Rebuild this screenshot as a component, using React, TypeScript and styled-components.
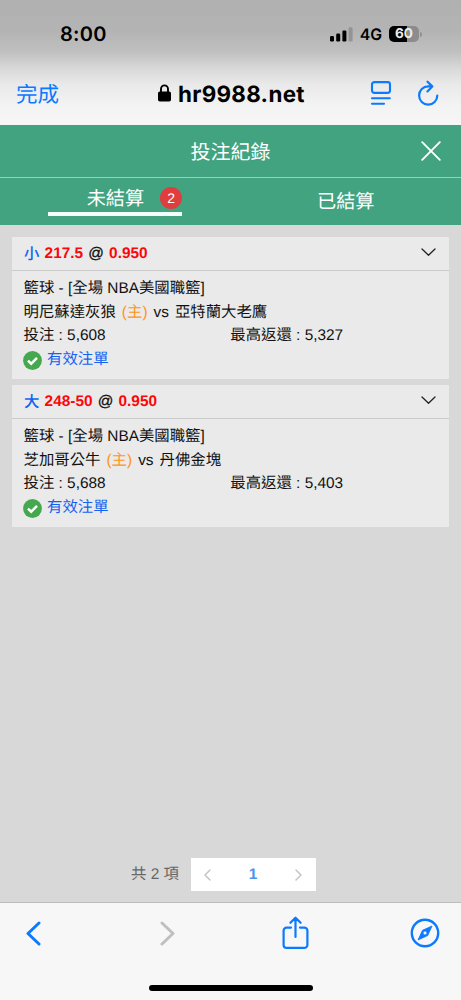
import React from "react";
import styled, { createGlobalStyle } from "styled-components";

const GlobalStyle = createGlobalStyle`
  *, *::before, *::after { box-sizing: border-box; }
  body { margin: 0; background: #d8d8d8; text-rendering: geometricPrecision; }
  svg { display: block; flex: none; }
`;

const Screen = styled.div`
  width: 461px;
  height: 1000px;
  display: flex;
  flex-direction: column;
  overflow: hidden;
  background: #d8d8d8;
  color: #111;
  font-family: "Liberation Sans", "Noto Sans CJK TC", sans-serif;
  font-size: 15.4px;
`;

const BrowserTop = styled.header`
  height: 125px;
  flex: none;
  background: linear-gradient(#b0b0b0 0, #b4b4b4 32px, #c0c0c0 52px, #d8d8d8 68px, #e9e9e9 84px, #f3f3f3 105px, #f6f6f6 125px);
`;

const StatusBar = styled.div`
  height: 68px;
  display: flex;
  justify-content: space-between;
  align-items: center;
  padding: 0 39px 0 60px;
  font-family: Inter, sans-serif;
  color: #000;
`;

const Clock = styled.span`
  font-size: 20px;
  font-weight: 600;
  letter-spacing: 0.3px;
`;

const StatusIcons = styled.div`
  display: flex;
  align-items: center;
`;

const Network = styled.span`
  font-size: 15.8px;
  font-weight: 600;
  margin: 1px 7px 0 7px;
`;

const Battery = styled.div`
  display: flex;
  align-items: center;
  gap: 1px;
  &::after {
    content: "";
    width: 2px;
    height: 5px;
    border-radius: 0 2px 2px 0;
    background: #929292;
  }
`;

const BatteryLevel = styled.div`
  width: 30px;
  height: 16px;
  border-radius: 5px;
  background: linear-gradient(90deg, #000 60%, #8c8c8c 60%);
  color: #ececec;
  font-size: 13.5px;
  font-weight: 700;
  line-height: 17.5px;
  text-align: center;
`;

const AddressBar = styled.div`
  height: 51px;
  display: flex;
  align-items: center;
  padding: 0 22px 0 16px;
  color: #0a7aff;
`;

const Done = styled.span`
  width: 142px;
  font-family: "Noto Sans CJK TC", sans-serif;
  font-size: 21.5px;
  font-weight: 400;
  line-height: 30px;
`;

const Address = styled.div`
  display: flex;
  align-items: center;
  gap: 7px;
  width: 212px;
  margin-top: 1px;
  color: #000;
  font-family: Inter, sans-serif;
  font-size: 22.4px;
  font-weight: 700;
  letter-spacing: 0.3px;
  white-space: nowrap;
  svg { margin-top: -2px; }
`;

const AddressActions = styled.div`
  display: flex;
  align-items: center;
  gap: 25px;
  margin-top: -1px;
`;

const TitleBar = styled.div`
  height: 53px;
  flex: none;
  display: grid;
  grid-template-columns: 40px 1fr 40px;
  align-items: center;
  padding: 0 20px;
  background: #41a380;
  border-bottom: 1px solid #9bceba;
  color: #fff;
  text-align: center;
  font-family: "Noto Sans CJK TC", sans-serif;
  font-size: 20px;
  line-height: 30px;
  svg { justify-self: end; }
`;

const Tabs = styled.nav`
  height: 47px;
  flex: none;
  display: grid;
  grid-template-columns: 1fr 1fr;
  justify-items: center;
  align-items: start;
  background: #41a380;
  color: #fff;
  font-family: "Noto Sans CJK TC", sans-serif;
  font-size: 19.2px;
`;

const Tab = styled.div<{ $active?: boolean }>`
  width: 134px;
  height: ${(p) => (p.$active ? 38 : 44)}px;
  display: flex;
  align-items: center;
  justify-content: ${(p) => (p.$active ? "flex-end" : "center")};
  gap: 16px;
  border-bottom: ${(p) => (p.$active ? "4px solid #f4fffb" : "0")};
  padding-top: ${(p) => (p.$active ? 4 : 0)}px;
  line-height: 28px;
`;

const Badge = styled.span`
  width: 22px;
  height: 22px;
  margin-top: 2px;
  border-radius: 50%;
  background: #e03e3e;
  font-family: "Liberation Sans", sans-serif;
  font-size: 14px;
  line-height: 22px;
  text-align: center;
`;

const BetList = styled.main`
  flex: 1;
  display: flex;
  flex-direction: column;
  gap: 6px;
  padding: 12px 12px 0;
`;

const Card = styled.article`
  height: 142px;
  background: #eaeaea;
`;

const CardHeader = styled.div`
  height: 34px;
  display: flex;
  align-items: center;
  gap: 5.2px;
  padding: 0 13px 0 12px;
  border-bottom: 1px solid #cacaca;
  color: #fb060a;
  font-weight: 700;
  line-height: 24px;
  svg { margin: -3px 0 0 auto; }
`;

const Side = styled.span`
  color: #1463f0;
  font-weight: 500;
  margin-top: 2px;
`;

const At = styled.span`
  color: #111;
  font-weight: 400;
  -webkit-text-stroke: 0.3px #111;
`;

const CardBody = styled.div`
  padding: 6px 12px 0 11.5px;
`;

const Line = styled.div`
  height: 23.6px;
  display: flex;
  align-items: center;
  line-height: 23.6px;
  white-space: pre;
`;

const Half = styled.span`
  width: 50%;
`;

const Home = styled.span`
  color: #ff9518;
  margin: 0 6px;
`;

const Versus = styled.span`
  margin-right: 6px;
`;

const Status = styled(Line)`
  gap: 5px;
  height: 25px;
  margin-left: -0.5px;
  line-height: 26px;
  color: #1463f0;
`;

const Pagination = styled.div`
  height: 33px;
  flex: none;
  display: flex;
  align-items: center;
  gap: 12px;
  margin: 0 0 11px 131px;
  color: #666;
  line-height: 30px;
`;

const Total = styled.span`
  margin-top: 0;
`;

const Pager = styled.div`
  width: 125px;
  height: 33px;
  display: flex;
  align-items: center;
  justify-content: space-between;
  padding: 0 14px 0 13px;
  background: #fff;
  color: #4a94ec;
  font-weight: 700;
`;

const BrowserBottom = styled.footer`
  height: 98px;
  flex: none;
  display: flex;
  flex-direction: column;
  align-items: center;
  background: #f7f7f7;
  border-top: 1px solid #bcbcbc;
`;

const Toolbar = styled.div`
  width: 100%;
  height: 60px;
  display: grid;
  grid-template-columns: 133.5px 122px 128.5px 30px;
  align-items: center;
  padding: 0 20px 0 26px;
`;

const HomeIndicator = styled.div`
  width: 164px;
  height: 6px;
  margin-top: 22px;
  border-radius: 3px;
  background: #000;
`;

function Signal() {
  return (
    <svg width="23" height="15" viewBox="0 0 23 15">
      <rect x="0" y="9" width="4" height="5.5" rx="1.2" />
      <rect x="6.2" y="6.5" width="4" height="8" rx="1.2" />
      <rect x="12.4" y="3.5" width="4" height="11" rx="1.2" />
      <rect x="18.6" y="0.3" width="4" height="14.2" rx="1.2" fill="#949494" />
    </svg>
  );
}

function Lock() {
  return (
    <svg width="13" height="18" viewBox="0 0 13 18">
      <rect x="0" y="7.5" width="13" height="10" rx="1.8" />
      <path d="M3 8V4.9a3.5 3.5 0 0 1 7 0V8" fill="none" stroke="#000" strokeWidth="1.9" />
    </svg>
  );
}

function Reader() {
  return (
    <svg width="22" height="26" viewBox="0 0 22 26" fill="none" stroke="#0a7aff" strokeWidth="2.1" strokeLinecap="round">
      <rect x="2" y="2.1" width="18" height="10.8" rx="2.4" />
      <path d="M2 18.3h17.8M2 23.7h12" />
    </svg>
  );
}

function Reload() {
  return (
    <svg width="22" height="26" viewBox="0 0 22 26" fill="none" stroke="#0a7aff" strokeWidth="2.2" strokeLinecap="round" strokeLinejoin="round">
      <path d="M14.6 6.4H11.2a9.1 9.1 0 1 0 9.1 9.1M10.5 1.7l4.8 4.7-4.9 5" />
    </svg>
  );
}

function Check() {
  return (
    <svg width="19" height="19" viewBox="0 0 19 19">
      <circle cx="9.5" cy="9.5" r="9.4" fill="#46a84e" />
      <path d="M5 9.6l3.2 3.1 5.8-5.9" fill="none" stroke="#fff" strokeWidth="2.5" />
    </svg>
  );
}

function Arrow({ d, w, h, color, stroke }: { d: string; w: number; h: number; color: string; stroke: number }) {
  return (
    <svg width={w} height={h} viewBox={`0 0 ${w} ${h}`} fill="none" stroke={color} strokeWidth={stroke} strokeLinecap="round" strokeLinejoin="round">
      <path d={d} />
    </svg>
  );
}

function Share() {
  return (
    <svg width="27" height="34" viewBox="0 0 27 34" fill="none" stroke="#0a7aff" strokeWidth="2.2" strokeLinecap="round" strokeLinejoin="round">
      <path d="M9 11.6H4.6a3 3 0 0 0-3 3v14.3a3 3 0 0 0 3 3h17.8a3 3 0 0 0 3-3V14.6a3 3 0 0 0-3-3H18M13.5 21V2M8.4 6.8l5.1-5.1 5.1 5.1" />
    </svg>
  );
}

function Compass() {
  return (
    <svg width="30" height="30" viewBox="0 0 30 30">
      <circle cx="15" cy="15" r="13.2" fill="none" stroke="#0a7aff" strokeWidth="2.4" />
      <path fillRule="evenodd" fill="#0a7aff" stroke="#0a7aff" strokeWidth=".8" strokeLinejoin="round" d="M22 8L17.7 17.6 8 22l4.5-9.7ZM15 13a2 2 0 1 0 0 4 2 2 0 0 0 0-4Z" />
    </svg>
  );
}

interface Bet {
  side: string;
  line: string;
  home: string;
  away: string;
  stake: string;
  payout: string;
}

const bets: Bet[] = [
  { side: "小", line: "217.5", home: "明尼蘇達灰狼", away: "亞特蘭大老鷹", stake: "5,608", payout: "5,327" },
  { side: "大", line: "248-50", home: "芝加哥公牛", away: "丹佛金塊", stake: "5,688", payout: "5,403" },
];

function BetCard({ bet }: { bet: Bet }) {
  return (
    <Card>
      <CardHeader>
        <Side>{bet.side}</Side>
        <span>{bet.line}</span>
        <At>@</At>
        <span>0.950</span>
        <Arrow d="M1 1l6.5 6.2L14 1" w={15} h={8} color="#222" stroke={1.3} />
      </CardHeader>
      <CardBody>
        <Line>籃球 - [全場 NBA美國職籃]</Line>
        <Line>
          {bet.home}
          <Home>(主)</Home>
          <Versus>vs</Versus>
          {bet.away}
        </Line>
        <Line>
          <Half>投注 : {bet.stake}</Half>
          <Half>最高返還 : {bet.payout}</Half>
        </Line>
        <Status>
          <Check />
          有效注單
        </Status>
      </CardBody>
    </Card>
  );
}

export default function App() {
  return (
    <>
      <GlobalStyle />
      <Screen>
        <BrowserTop>
          <StatusBar>
            <Clock>8:00</Clock>
            <StatusIcons>
              <Signal />
              <Network>4G</Network>
              <Battery>
                <BatteryLevel>60</BatteryLevel>
              </Battery>
            </StatusIcons>
          </StatusBar>
          <AddressBar>
            <Done>完成</Done>
            <Address>
              <Lock />
              hr9988.net
            </Address>
            <AddressActions>
              <Reader />
              <Reload />
            </AddressActions>
          </AddressBar>
        </BrowserTop>
        <TitleBar>
          <span />
          投注紀錄
          <Arrow d="M1.2 1.2l17.6 17.6M18.8 1.2L1.2 18.8" w={20} h={20} color="#fff" stroke={1.9} />
        </TitleBar>
        <Tabs>
          <Tab $active>
            未結算<Badge>2</Badge>
          </Tab>
          <Tab>已結算</Tab>
        </Tabs>
        <BetList>
          {bets.map((bet) => (
            <BetCard key={bet.line} bet={bet} />
          ))}
        </BetList>
        <Pagination>
          <Total>共 2 項</Total>
          <Pager>
            <Arrow d="M6 1L1 6l5 5" w={7} h={12} color="#c4c4c4" stroke={1.5} />
            1
            <Arrow d="M1 1l5 5-5 5" w={7} h={12} color="#c4c4c4" stroke={1.5} />
          </Pager>
        </Pagination>
        <BrowserBottom>
          <Toolbar>
            <Arrow d="M13 2L2 12.5 13 23" w={15} h={25} color="#0a7aff" stroke={3} />
            <Arrow d="M2 2l11 10.5L2 23" w={15} h={25} color="#bfbfbf" stroke={3} />
            <Share />
            <Compass />
          </Toolbar>
          <HomeIndicator />
        </BrowserBottom>
      </Screen>
    </>
  );
}
